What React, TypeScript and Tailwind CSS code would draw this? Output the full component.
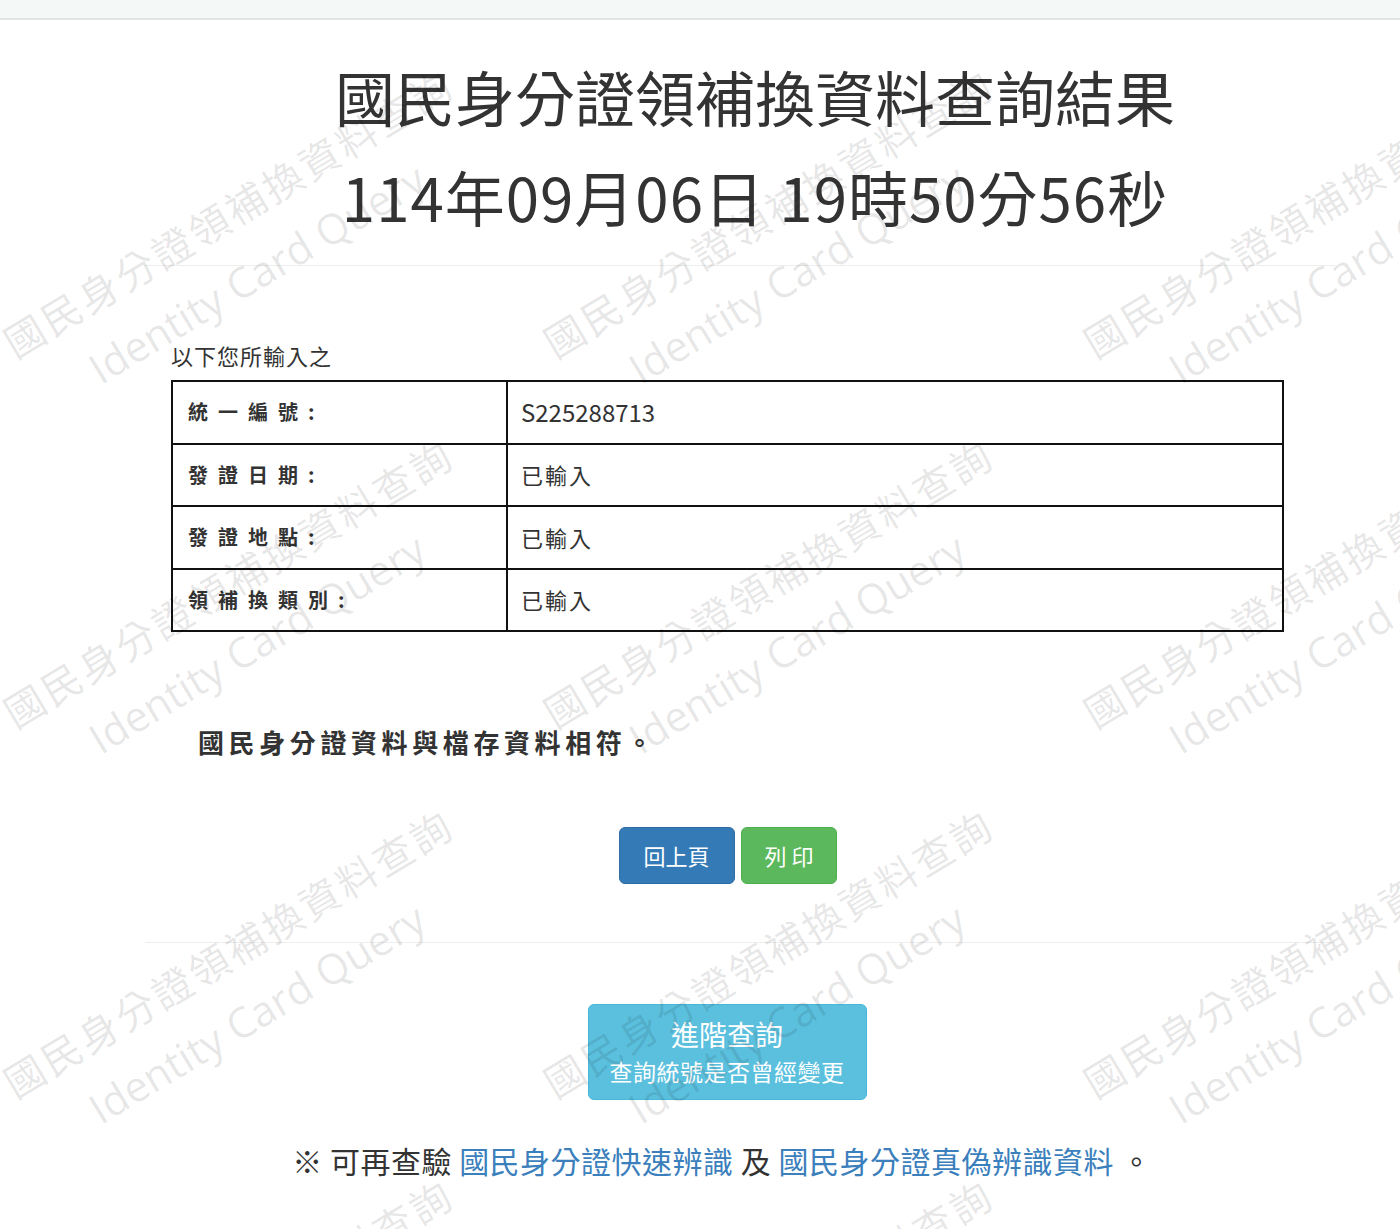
import React from 'react';

const rows = [
  { label: '統一編號:', value: 'S225288713', mono: true },
  { label: '發證日期:', value: '已輸入' },
  { label: '發證地點:', value: '已輸入' },
  { label: '領補換類別:', value: '已輸入' },
];

// watermark anchors (bottom-left of the first line)
const marks: { x: number; y: number }[] = [];
for (const y of [364, 734, 1104, 1474]) {
  for (const x of [18, 558, 1098]) marks.push({ x, y });
}

const Watermark: React.FC<{ x: number; y: number }> = ({ x, y }) => (
  <div
    className="absolute origin-[0_44px] rotate-[-31deg] whitespace-nowrap text-black/10"
    style={{ left: x, top: y - 44 }}
  >
    <div className="text-[40px] leading-[44px] tracking-[3px] font-['Noto_Sans_CJK_TC',sans-serif]">
      國民身分證領補換資料查詢
    </div>
    <div className="mt-[22px] pl-[60px] text-[42px] leading-[46px] font-['Open_Sans',sans-serif]">
      Identity Card Query
    </div>
  </div>
);

export default function App() {
  return (
    <div className="relative min-h-[1229px] overflow-hidden bg-white text-[#333] font-['Noto_Sans_CJK_TC','Noto_Sans_CJK_JP',sans-serif]">
      <div className="h-[20px] bg-[#f4f9f8] border-b-2 border-[#dfe6e5]" />

      <div className="ml-[145px] w-[1190px]">
        <div className="pt-[26px] pl-[30px] text-center text-[60px] leading-[100px] text-[#333]">
          <div>國民身分證領補換資料查詢結果</div>
          <div className="tracking-[1px]">114年09月06日 19時50分56秒</div>
        </div>

        <div className="mt-[19px] border-t border-[#eeeeee]" />

        <div className="ml-[26px] mt-[75px] text-[22px] leading-[28px] tracking-[1px]">以下您所輸入之</div>

        <table className="ml-[26px] mt-[11px] w-[1113px] border-collapse border-2 border-[#111]">
          <tbody>
            {rows.map((r) => (
              <tr key={r.label} className="h-[62.5px]">
                <td className="w-[335px] border-2 border-[#111] pl-[15px] text-[20px] font-bold tracking-[10px] text-[#333]">
                  {r.label}
                </td>
                <td
                  className={`border-2 border-[#111] pl-[13px] text-[#333] ${r.mono ? 'text-[24px]' : 'text-[22px] tracking-[2px]'}`}
                >
                  {r.value}
                </td>
              </tr>
            ))}
          </tbody>
        </table>

        <div className="ml-[53px] mt-[92px] text-[26px] leading-[36px] font-bold tracking-[4.6px] text-[#333]">
          國民身分證資料與檔存資料相符。
        </div>

        <div className="mt-[67px] flex justify-center gap-[6px] pr-[24px]">
          <button className="h-[57px] px-[24px] rounded-[6px] bg-[#337ab7] border border-[#2e6da4] text-white text-[22px]">
            回上頁
          </button>
          <button className="h-[57px] px-[23px] rounded-[6px] bg-[#5cb85c] border border-[#4cae4c] text-white text-[22px]">
            列 印
          </button>
        </div>

        <div className="mt-[58px] border-t border-[#eeeeee]" />

        <div className="mt-[61px] flex justify-center pr-[26px]">
          <button className="w-[279px] h-[96px] rounded-[6px] bg-[#5bc0de] border border-[#46b8da] text-white flex flex-col items-center justify-center">
            <span className="text-[28px] leading-[38px]">進階查詢</span>
            <span className="text-[23px] leading-[36px] tracking-[0.5px]">查詢統號是否曾經變更</span>
          </button>
        </div>

        <div className="mt-[40px] pr-[36px] text-center text-[30px] leading-[40px] tracking-[0.5px] text-[#333]">
          ※ 可再查驗 <a className="text-[#3c7fbd]">國民身分證快速辨識</a> 及{' '}
          <a className="text-[#3c7fbd]">國民身分證真偽辨識資料</a> 。
        </div>
      </div>

      <div className="pointer-events-none absolute inset-0">
        {marks.map((m) => (
          <Watermark key={`${m.x}-${m.y}`} x={m.x} y={m.y} />
        ))}
      </div>
    </div>
  );
}
